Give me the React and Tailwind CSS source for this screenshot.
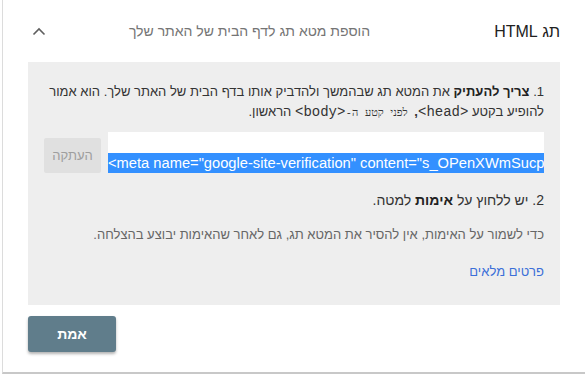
import React from 'react';

export default function App() {
  const metaTag = '<meta name="google-site-verification" content="s_OPenXWmSucp';

  return (
    <div className="w-[587px] h-[375px] bg-white overflow-hidden" style={{ fontFamily: '"Liberation Sans", Arial, sans-serif' }}>
      <div dir="rtl" className="ml-[2px] mr-[2px] h-[374px] bg-white border-l border-[#dcdcdc] border-b-2 border-b-[#c8c8c8] pr-[25px] pl-[25px]">
        {/* header */}
        <div className="flex items-center h-[62px]">
          <div className="w-[139px] text-[16px] text-[#212121] pt-[1px]">תג HTML</div>
          <div className="flex-1 text-center text-[14px] text-[#757575]">הוספת מטא תג לדף הבית של האתר שלך</div>
          <div className="w-[50px] flex justify-end pl-[4px]">
            <svg width="14" height="9" viewBox="0 0 14 9" fill="none">
              <path d="M1.5 7.5L7 2l5.5 5.5" stroke="#5f5f5f" strokeWidth="1.6" />
            </svg>
          </div>
        </div>

        {/* instructions panel */}
        <div className="bg-[#eeeeee] h-[243px] px-[16px] pt-[20px] text-[13px] text-[#333333]">
          <p className="leading-[20px]">
            1. <b className="font-bold text-[#222222]">צריך להעתיק</b> את המטא תג שבהמשך ולהדביק אותו בדף הבית של האתר שלך. הוא אמור להופיע בקטע{' '}
            <span className="font-['Liberation_Mono',monospace] text-[14px]">&lt;head&gt;</span>
            <b>,</b>{'  '}
            <span className="font-['DejaVu_Sans_Mono',monospace] text-[11px] pr-[3px]">לפני קטע ה-</span>
            <span className="font-['Liberation_Mono',monospace] text-[14px]">&lt;body&gt;</span> הראשון.
          </p>

          <div className="flex items-end gap-[7px] mt-[9px]">
            <div className="flex-1 h-[41px] bg-white flex items-end overflow-hidden">
              <div dir="ltr" className="w-full h-[20px] bg-[#3390ff] text-white text-[14.7px] leading-[20px] whitespace-nowrap overflow-hidden">
                {metaTag}
              </div>
            </div>
            <div className="w-[57px] h-[35px] bg-[#e0e0e0] rounded-[2px] flex items-center justify-center text-[13px] text-[#9e9e9e]">
              העתקה
            </div>
          </div>

          <p className="mt-[17px] leading-[20px] text-[14px]">
            2. יש ללחוץ על <b className="font-bold text-[#222222]">אימות</b> למטה.
          </p>

          <p className="mt-[15px] leading-[20px] text-[#666666]">
            כדי לשמור על האימות, אין להסיר את המטא תג, גם לאחר שהאימות יבוצע בהצלחה.
          </p>

          <p className="mt-[17px] leading-[20px] text-[#3b6fd8]">פרטים מלאים</p>
        </div>

        {/* verify button */}
        <div className="flex justify-end mt-[11px]">
          <div className="w-[88px] h-[36px] bg-[#607d8b] rounded-[3px] shadow-[0_2px_3px_rgba(0,0,0,0.3)] flex items-center justify-center text-white font-bold text-[14px]">
            אמת
          </div>
        </div>
      </div>
    </div>
  );
}
